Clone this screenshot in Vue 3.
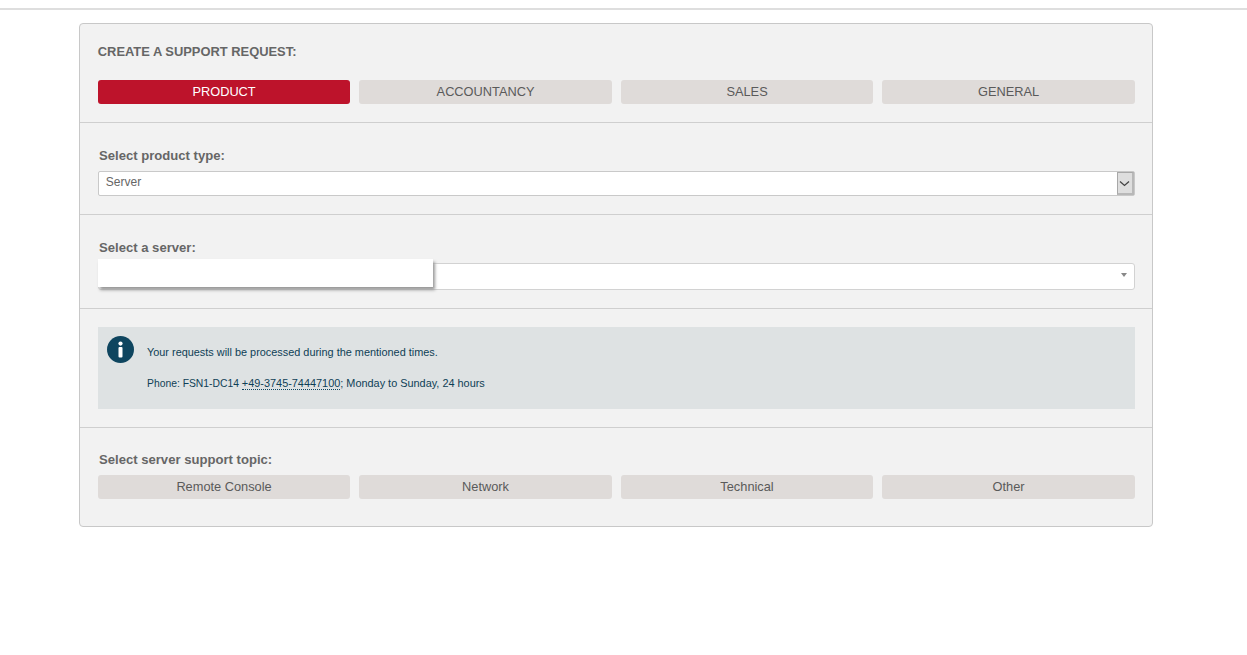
<script setup>
const tabs = ['PRODUCT', 'ACCOUNTANCY', 'SALES', 'GENERAL']
const topics = ['Remote Console', 'Network', 'Technical', 'Other']
</script>

<template>
  <div class="page">
    <div class="topline"></div>
    <main class="panel">
      <section class="sec sec-head">
        <h2 class="title">CREATE A SUPPORT REQUEST:</h2>
        <div class="btns">
          <div v-for="(t, i) in tabs" :key="t" class="btn" :class="{ active: i === 0 }">{{ t }}</div>
        </div>
      </section>
      <section class="sec sec-type">
        <div class="label">Select product type:</div>
        <div class="native">
          <span class="native-val">Server</span>
          <span class="native-arrow">
            <svg width="11" height="7" viewBox="0 0 11 7"><path d="M1 1.5l4.5 4 4.5-4" fill="none" stroke="#444" stroke-width="1.3"/></svg>
          </span>
        </div>
      </section>
      <section class="sec sec-server">
        <div class="label">Select a server:</div>
        <div class="combo">
          <span class="caret"></span>
          <div class="redact"></div>
        </div>
      </section>
      <section class="sec sec-info">
        <div class="info">
          <svg class="info-icon" width="27" height="27" viewBox="0 0 27 27">
            <circle cx="13.5" cy="13.5" r="13.5" fill="#0e455f"/>
            <circle cx="13.5" cy="7.6" r="2.1" fill="#fff"/>
            <rect x="11.5" y="11" width="4" height="10.5" rx="1" fill="#fff"/>
          </svg>
          <div class="info-text">
            <p class="line-1">Your requests will be processed during the mentioned times.</p>
            <p class="line-2"><span class="phone">Phone: FSN1-DC14 </span><span class="tel">+49-3745-74447100</span>; Monday to Sunday, 24 hours</p>
          </div>
        </div>
      </section>
      <section class="sec sec-topic">
        <div class="label">Select server support topic:</div>
        <div class="btns">
          <div v-for="t in topics" :key="t" class="btn">{{ t }}</div>
        </div>
      </section>
    </main>
  </div>
</template>

<style>
html, body { background: #fff; }
</style>

<style scoped>
.page {
  height: 655px;
  padding-top: 8px;
  box-sizing: border-box;
  font-family: "Liberation Sans", Arial, sans-serif;
  overflow: hidden;
}
.topline { height: 2px; background: #dedede; }
.panel {
  margin: 13px 0 0 79px;
  width: 1074px;
  height: 504px;
  box-sizing: border-box;
  border: 1px solid #c8c8c8;
  border-radius: 4px;
  background: #f2f2f2;
  display: flex;
  flex-direction: column;
}
.sec {
  box-sizing: border-box;
  padding: 0 17.2px 0 17.8px;
  border-bottom: 1px solid #cfcfcf;
}
.sec:last-child { border-bottom: 0; flex: 1; }
.sec-head { height: 99px; padding-top: 20px; }
.sec-type { height: 92px; padding-top: 25px; }
.sec-server { height: 94px; padding-top: 25px; }
.sec-info { height: 119px; padding-top: 18px; }
.sec-topic { padding-top: 24px; }
.title {
  margin: 0 0 20px;
  font-size: 12.9px;
  line-height: 16px;
  font-weight: 700;
  color: #666;
}
.btns {
  display: grid;
  grid-template-columns: repeat(4, 1fr);
  gap: 9px;
}
.sec-topic .btns { margin-top: 7px; }
.btn {
  height: 24px;
  line-height: 23px;
  border-radius: 3px;
  background: #dfdbd9;
  color: #5a5a5a;
  font-size: 12.8px;
  text-align: center;
}
.btn.active { background: #bd132b; color: #fff; }
.label {
  padding-left: 1.2px;
  font-size: 13.1px;
  line-height: 16px;
  font-weight: 700;
  color: #666;
}
.native {
  margin-top: 7px;
  height: 25px;
  box-sizing: border-box;
  display: flex;
  justify-content: space-between;
  border: 1px solid #c9c9c9;
  border-radius: 2px;
  background: #fff;
}
.native-val { padding-left: 7px; font-size: 12px; line-height: 21px; color: #666; }
.native-arrow {
  width: 17px;
  height: 23px;
  border: 1px solid #a8a8a8;
  border-right: 2px solid #b8b8b8;
  border-bottom: 2px solid #b8b8b8;
  background: #dedede;
  display: flex;
  align-items: center;
  justify-content: center;
  box-sizing: border-box;
}
.combo {
  position: relative;
  margin-top: 7px;
  height: 27px;
  box-sizing: border-box;
  border: 1px solid #d2d2d2;
  border-radius: 3px;
  background: #fff;
}
.caret {
  position: absolute;
  right: 7px;
  top: 9px;
  border-left: 3px solid transparent;
  border-right: 3px solid transparent;
  border-top: 4px solid #888;
}
.redact {
  position: absolute;
  left: -1px;
  top: -5px;
  width: 335px;
  height: 28px;
  background: #fff;
  box-shadow: 2px 3px 3px #999;
}
.info {
  height: 82px;
  box-sizing: border-box;
  background: #dee2e3;
  padding: 9px 0 0 9.2px;
  display: flex;
  color: #0e3f56;
  font-size: 10.9px;
}
.info-icon { flex: none; }
.info-text { margin-left: 13px; }
.info-text p { margin: 0; line-height: 13px; }
.line-1 { padding-top: 10px; }
.line-2 { padding-top: 18px; }
.phone { font-size: 10.35px; }
.tel { border-bottom: 1px dotted #0e455f; }
</style>
